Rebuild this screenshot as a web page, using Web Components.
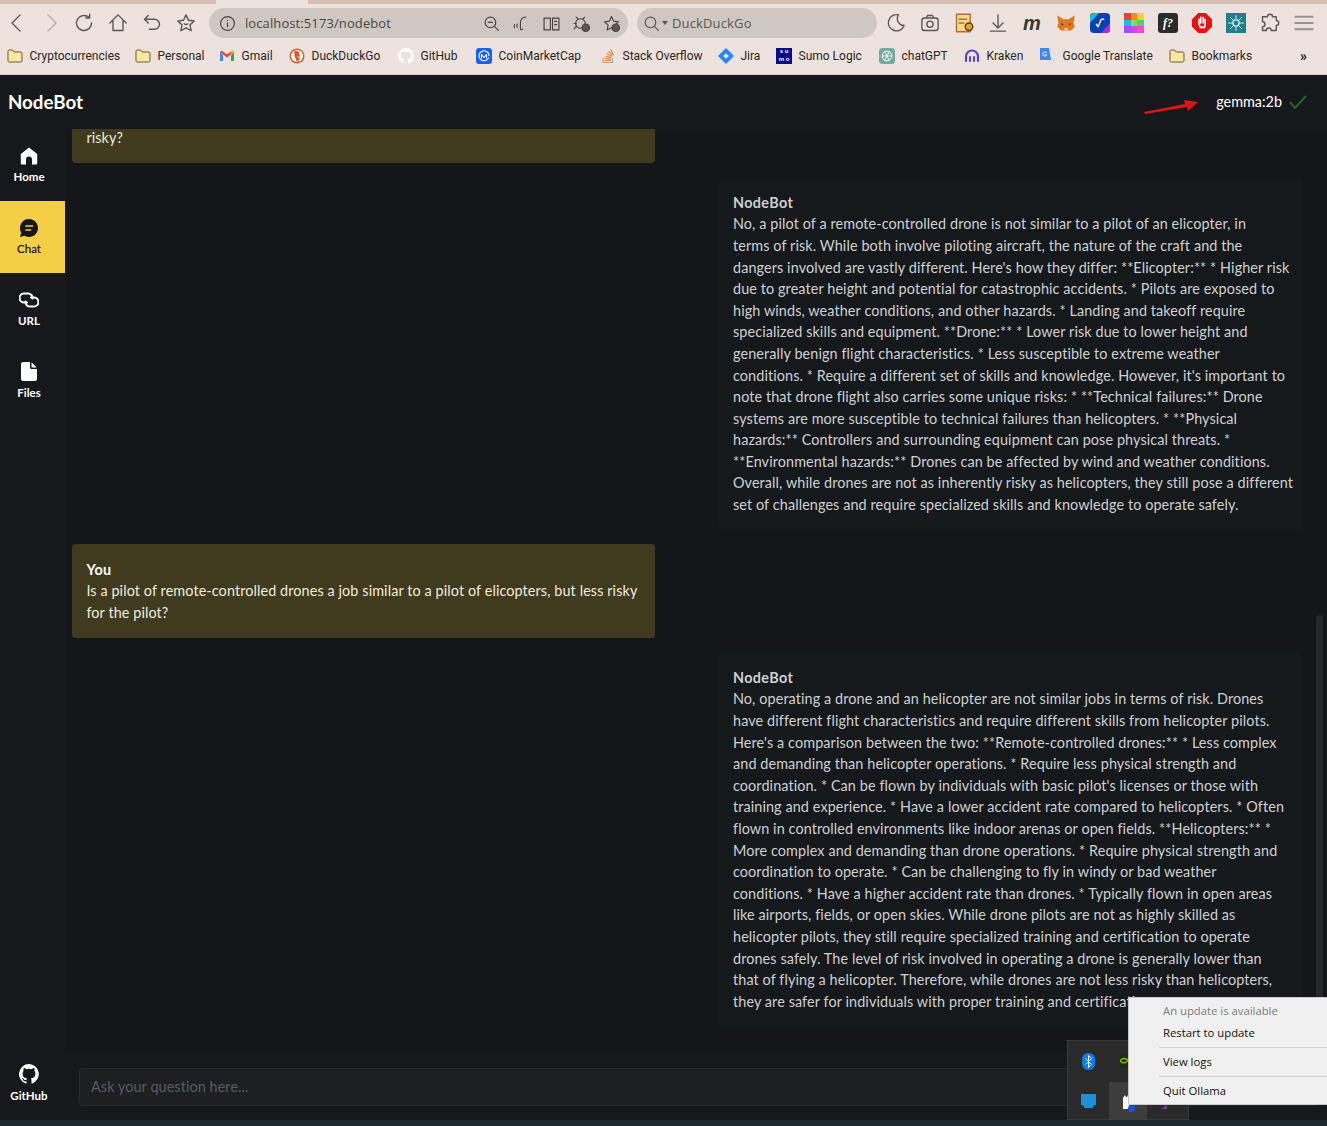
<!DOCTYPE html>
<html lang="en">
<head>
<meta charset="utf-8">
<title>NodeBot</title>
<style>
html, body { margin: 0; height: 100%; overflow: hidden; background: #17181b; }
body { font-family: "Lato", "Liberation Sans", sans-serif; }
</style>
</head>
<body>
<browser-chrome></browser-chrome>
<node-bot></node-bot>
<tray-menu></tray-menu>

<script>
const svg = (body, size = 16) => `<svg width="${size}" height="${size}" viewBox="0 0 16 16" fill="none" stroke="currentColor" stroke-width="1.1" stroke-linecap="round" stroke-linejoin="round">${body}</svg>`;

const githubPath = "M8 0a8 8 0 0 0-2.5 15.6c.4.1.5-.2.5-.4v-1.400c-2.200.5-2.700-1-2.700-1-.4-.9-.9-1.200-.9-1.200-.7-.5.100-.5.100-.5.800.1 1.200.8 1.200.8.700 1.200 1.900.9 2.300.7.100-.5.300-.9.500-1.100-1.800-.2-3.600-.9-3.600-4 0-.9.300-1.600.8-2.100-.1-.2-.4-1 .1-2.100 0 0 .7-.2 2.200.8a7.700 7.700 0 0 1 4 0c1.500-1 2.200-.8 2.200-.8.400 1.100.2 1.900.1 2.100.5.600.8 1.300.8 2.100 0 3.100-1.900 3.700-3.700 3.900.3.300.6.800.6 1.500v2.200c0 .2.100.5.600.4A8 8 0 0 0 8 0z";

const folder = svg(`<path d="M1 3.2C1 2.500 1.500 2 2.200 2h3.400l1.600 2h6.600c.7 0 1.200.5 1.200 1.200v7.600c0 .7-.5 1.200-1.200 1.200H2.200C1.500 14 1 13.500 1 12.800z" fill="#fbe7a1" stroke="#6e5c2a" stroke-width="1"/>`);

// label, icon, distance to the next bookmark's icon
const bookmarks = [
	["Cryptocurrencies", folder, 128],
	["Personal", folder, 84],
	["Gmail", svg(`<path d="M1 4v9h3V7z" fill="#4285f4" stroke="none"/><path d="M15 4v9h-3V7z" fill="#34a853" stroke="none"/><path d="M1 4l1.500-1.400L8 6.600l5.500-4L15 4 8 9.500z" fill="#ea4335" stroke="none"/><path d="M12 7l3-3-1.500-1.400L12 4z" fill="#fbbc04" stroke="none"/>`), 70],
	["DuckDuckGo", svg(`<circle cx="8" cy="8" r="7.500" fill="#de5833" stroke="none"/><circle cx="8" cy="8" r="6" fill="#fff" stroke="none"/><path d="M5.500 3c3-.8 5.500 1 5 4 .5 2 .2 4-.8 6.500H7.500C7 10.500 4.500 7 5.500 3z" fill="#de5833" stroke="none"/><path d="M8 8h3.200L9.500 10z" fill="#fdd20a" stroke="none"/><path d="M8.500 10.500l1 3H8z" fill="#65bc46" stroke="none"/>`), 109],
	["GitHub", `<svg width="16" height="16" viewBox="0 0 16 16" fill="#fff"><path d="${githubPath}"/></svg>`, 78],
	["CoinMarketCap", svg(`<rect x="0" y="0" width="16" height="16" rx="3" fill="#1d5ff2" stroke="none"/><path d="M12.500 10A5 5 0 1 1 13 7.500" stroke="#fff"/><path d="M5.500 10V6.500l2.500 3 2.500-3V10" stroke="#fff"/>`), 124],
	["Stack Overflow", svg(`<path d="M3 10v4.500h9.500V10" stroke="#a8a29c"/><path d="M5 12.500h5.500M5.200 10.500l5.200.6M5.800 8.200l5 1.400M7 5.800l4.400 2.500M8.800 3.600l3.600 3.600M11 1.500l1.900 4.700" stroke="#ef8236" stroke-width="1.100"/>`), 118],
	["Jira", svg(`<path d="M8 0l8 8-8 8-8-8z" fill="#2684ff" stroke="none"/><path d="M8 5.200L10.800 8 8 10.800 5.200 8z" fill="#ede2dd" stroke="none"/>`), 58],
	["Sumo Logic", `<span class="sumo">s u<br>m o</span>`, 103],
	["chatGPT", svg(`<rect x="0" y="0" width="16" height="16" rx="3.500" fill="#74aa9c" stroke="none"/><circle cx="8" cy="8" r="4.800" stroke="#fff" stroke-width="1"/><path d="M6 4l4 8M10 4l-4 8M3.500 8h9" stroke="#fff" stroke-width=".8"/>`), 85],
	["Kraken", svg(`<path d="M2 13V8.500a6 6 0 0 1 12 0V13" stroke="#5741d9" stroke-width="2.200"/><path d="M6 13V9M10 13V9" stroke="#5741d9" stroke-width="2"/>`), 76],
	["Google Translate", svg(`<path d="M7 4h8.500v12H9z" fill="#dfe3e8" stroke="none"/><path d="M0 0h9l2 12H0z" fill="#4285f4" stroke="none"/><path d="M6.500 4.500a2.200 2.200 0 1 0 .3 2.500H4.800" stroke="#fff" stroke-width=".9"/>`), 129],
	["Bookmarks", folder, 131],
];

class BrowserChrome extends HTMLElement {
	constructor() {
		super();
		this.attachShadow({ mode: "open" });
		this.shadowRoot.innerHTML = `<style>
		:host { display: block; height: 75px; box-sizing: border-box; border-bottom: 1px solid #d5cbc6; background: #ede2dd; color: #5c5754; font-family: "Open Sans", "Liberation Sans", sans-serif; overflow: hidden; }
		svg { display: block; flex: none; }
		#tabs { display: flex; height: 4px; background: #d8bfb6; }
		#tabs i { width: 92px; margin-left: 216px; background: #ede2dd; }
		#tools { display: flex; align-items: center; height: 38px; }
		.btn { width: 33.8px; display: flex; justify-content: center; flex: none; }
		#url, #search { display: flex; align-items: center; height: 30px; border-radius: 15px; background: #cfc7c2; font-size: 13px; box-sizing: border-box; flex: none; }
		#url { width: 419px; margin-left: 6.2px; padding-left: 10px; gap: 9px; color: #4b4643; letter-spacing: .1px; }
		#url .right { margin-left: auto; display: flex; gap: 13px; padding-right: 8px; }
		#search { width: 240px; margin-left: 9px; padding-left: 6px; gap: 2px; color: #5c5754; letter-spacing: .15px; }
		#ext { display: flex; align-items: center; gap: 14px; margin-left: 9px; }
		#ext > * { flex: none; width: 20px; }
		#marks { display: flex; align-items: center; height: 28px; padding-left: 7px; font: 12px "Roboto", "Liberation Sans", sans-serif; color: #2b2725; white-space: nowrap; }
		.item { display: flex; align-items: center; gap: 6.500px; flex: none; }
		.sumo { display: block; width: 16px; height: 16px; flex: none; background: #0a0a86; color: #fff; font: 700 6px/7.500px "Liberation Sans", sans-serif; text-align: center; }
		#more { font-weight: 700; font-size: 14px; color: #222; }
		</style>
		<div id="tabs"><i></i></div>
		<div id="tools">
			<span class="btn">${svg(`<path d="M10.500 1.500L4 8l6.500 6.500"/>`, 20)}</span>
			<span class="btn" style="color:#b3aca8">${svg(`<path d="M5.500 1.500L12 8l-6.500 6.500"/>`, 20)}</span>
			<span class="btn">${svg(`<path d="M14 8a6 6 0 1 1-2-4.500M12.500 1v3h-3"/>`, 20)}</span>
			<span class="btn">${svg(`<path d="M1.500 8L8 1.500 14.500 8M4 6.500V14h8V6.500"/>`, 20)}</span>
			<span class="btn">${svg(`<path d="M5 2L2 5l3 3M2 5h8a4 4 0 0 1 0 8H6"/>`, 20)}</span>
			<span class="btn">${svg(`<path d="M8 1.500l2 4.300 4.600.6-3.400 3.100.9 4.700L8 11.900l-4.100 2.300.9-4.700L1.400 6.400 6 5.800z"/><path d="M6.500 8.500c.8.800 2.200.8 3 0"/>`, 20)}</span>
			<div id="url">
				${svg(`<circle cx="8" cy="8" r="6.500"/><path d="M8 7.500V11M8 5v.2"/>`, 17)}
				<span>localhost:5173/nodebot</span>
				<span class="right">
					${svg(`<circle cx="7" cy="7" r="5"/><path d="M5 7h4M11 11l3.500 3.500"/>`, 17)}
					${svg(`<path d="M1.500 9c-.5 1-.5 2 0 3M4 8.500c-.5 1-.5 2 0 3M12 2C9 2 7 4 7 7v6c0 1 1 1 2 .5"/>`, 17)}
					${svg(`<path d="M1 3h6v11H1zM9 3h6v11H9zM11 6h2M11 9h2"/>`, 17)}
					${svg(`<circle cx="7" cy="8" r="4.500"/><path d="M3 2l2 2M11 2L9 4M1 8h2M1 13l2-2"/><circle cx="12" cy="12" r="3.500" fill="#5c5754"/>`, 17)}
					${svg(`<path d="M8 1.500l2 4.300 4.600.6-3.400 3.100.9 4.700L8 11.900l-4.100 2.300.9-4.700L1.400 6.400 6 5.800z"/><circle cx="12" cy="12" r="3.500" fill="#5c5754"/>`, 17)}
				</span>
			</div>
			<div id="search">${svg(`<circle cx="7" cy="7" r="5"/><path d="M11 11l3.500 3.500"/>`, 17)}<svg width="6" height="4" viewBox="0 0 6 4"><path d="M0 0h6L3 4z" fill="#5c5754"/></svg><span style="margin-left:2px">DuckDuckGo</span></div>
			<div id="ext">
				${svg(`<path d="M10 1.500A6.500 6.500 0 1 0 14.500 10 5.500 5.500 0 0 1 10 1.500z"/>`, 20)}
				${svg(`<rect x="1.500" y="4" width="13" height="10" rx="2"/><path d="M5 4l1-2h4l1 2"/><circle cx="8" cy="9" r="2.500"/>`, 20)}
				${svg(`<rect x="2" y="1" width="11" height="14" fill="#fbd98a" stroke="#b06d2e"/><path d="M4 5h6M4 8h4" stroke="#b06d2e"/><circle cx="12" cy="11" r="3" fill="#e8a33c" stroke="#5c3a10"/>`, 20)}
				${svg(`<path d="M8 1.500v10M4 8l4 4 4-4M2 14.500h12"/>`, 20)}
				<span style="font: italic 700 20px/20px 'Liberation Sans', sans-serif; color: #3a3735; text-align: center;">m</span>
				${svg(`<path d="M1 2l5 3h4l5-3-1 6 1 3-3 3H4l-3-3 1-3z" fill="#e2761b" stroke="none"/><path d="M4 8l2 1-1 1zM12 8l-2 1 1 1z" fill="#233447" stroke="none"/><path d="M6 12h4l-1 2H7z" fill="#d7c1b3" stroke="none"/>`, 20)}
				${svg(`<rect x="0" y="0" width="16" height="16" rx="3" fill="#0a3fb5" stroke="none"/><path d="M0 4a4 4 0 0 1 4-4h3L0 8z" fill="#10c6d8" stroke="none"/><path d="M16 8v5a3 3 0 0 1-3 3H9z" fill="#b02ad8" stroke="none"/><path d="M5 9l1.500 2L9 5h2" stroke="#fff"/>`, 20)}
				<span style="display:grid;grid-template-columns:repeat(3,1fr);grid-auto-rows:6.500px;height:20px"><b style="background:#e8452c"></b><b style="background:#f58c1e"></b><b style="background:#fbd31b"></b><b style="background:#22b8e0"></b><b style="background:#8bdb4a"></b><b style="background:#4fce7c"></b><b style="background:#a64cf0"></b><b style="background:#c74bf0"></b><b style="background:#f04bd0"></b></span>
				<span style="display:flex;align-items:center;justify-content:center;height:20px;border-radius:3px;background:#2b2b2b;color:#fff;font:italic 700 12px 'Liberation Serif',serif;">f?</span>
				${svg(`<path d="M5 0h6l5 5v6l-5 5H5l-5-5V5z" fill="#ea1010" stroke="none"/><path d="M5.500 8V5M7 8V3.500M9 8V3.500M10.500 8.500V5M5.500 8l1 3.500h3.500l.5-3" stroke="#fff" stroke-width="1.300"/>`, 20)}
				${svg(`<rect x="0" y="0" width="16" height="16" fill="#1f7f8a" stroke="none"/><circle cx="8" cy="8" r="2.500" stroke="#cdeff0"/><path d="M8 2v3M8 11v3M2 8h3M11 8h3M3.500 3.500L6 6M12.500 3.500L10 6M3.500 12.500L6 10M12.500 12.500L10 10" stroke="#cdeff0" stroke-width=".8"/>`, 20)}
				${svg(`<path d="M6 3a2 2 0 0 1 4 0h3v3a2 2 0 0 1 0 4v4H9a2 2 0 0 0-4 0H2v-3a2 2 0 0 0 0-4V3z"/>`, 20)}
				${svg(`<path d="M1 3h14M1 8h14M1 13h14" stroke="#9a9490" stroke-width="1.500"/>`, 20)}
			</div>
		</div>
		<div id="marks">
			${bookmarks.map(([name, icon, width]) => `<span class="item" style="width:${width}px">${icon}<span>${name}</span></span>`).join("")}
			<span id="more">»</span>
		</div>`;
	}
}
customElements.define("browser-chrome", BrowserChrome);

class NavItem extends HTMLElement {
	constructor() {
		super();
		this.attachShadow({ mode: "open" });
		this.shadowRoot.innerHTML = `<style>
		:host { display: flex; flex-direction: column; align-items: center; justify-content: center; gap: 5px; width: 65px; height: 72px; box-sizing: border-box; padding-right: 7px; color: #fff; font-size: 11.500px; line-height: 14px; font-weight: 700; flex: none; }
		:host([active]) { background: #f4cf45; color: #17181b; font-weight: 400; -webkit-text-stroke: .2px #17181b; }
		::slotted(svg) { display: block; }
		</style><slot name="icon"></slot><slot></slot>`;
	}
}
customElements.define("nav-item", NavItem);

class ChatBubble extends HTMLElement {
	constructor() {
		super();
		this.attachShadow({ mode: "open" });
		this.shadowRoot.innerHTML = `<style>
		:host { display: block; width: 583px; box-sizing: border-box; padding: 14.400px; border-radius: 4px; background: #15191b; color: #cfd0d0; font-size: 14.400px; line-height: 21.600px; letter-spacing: .1px; white-space: nowrap; }
		:host([you]) { background: #403a1f; color: #efeadb; }
		:host([bot]) { align-self: flex-end; }
		b { display: block; font-weight: 700; letter-spacing: .35px; }
		:host([you]) b { color: #fff; }
		</style><b>${this.hasAttribute("you") ? "You" : "NodeBot"}</b><slot></slot>`;
	}
}
customElements.define("chat-bubble", ChatBubble);

class NodeBot extends HTMLElement {
	constructor() {
		super();
		this.attachShadow({ mode: "open" });
		this.shadowRoot.innerHTML = `<style>
		:host { display: grid; grid-template-columns: 65px 1fr; grid-template-rows: 54px 923px 74px; height: 1051px; background: #17181b; color: #fff; }
		svg { display: block; }
		header { grid-column: 1 / 3; display: flex; align-items: center; justify-content: space-between; padding: 0 20px 0 8px; }
		h1 { margin: -1px 0 0; font-size: 18.720px; font-weight: 700; }
		#model { display: flex; align-items: center; gap: 7px; font-size: 14.400px; position: relative; margin-top: -1px; }
		#arrow { position: absolute; left: -73px; top: 6px; }
		nav { grid-row: 2 / 4; display: flex; flex-direction: column; }
		nav .gh { margin-top: auto; margin-bottom: 7px; }
		main { position: relative; overflow: hidden; background: #141619; padding-right: 25.400px; }
		main .scroll { position: absolute; right: 4px; top: 486px; width: 7px; bottom: 0; background: #25272a; border-radius: 4px 4px 0 0; }
		#thread { display: flex; flex-direction: column; gap: 14.400px; padding-left: 7px; margin-top: -59.600px; }
		footer { padding: 16px 0 0 14px; background: #17181b; }
		input { display: block; box-sizing: border-box; width: 1240px; height: 38px; padding: 0 11px 1px; background: #1d1f22; border: 1px solid #26282b; border-radius: 4px; font: 14.400px "Lato", sans-serif; letter-spacing: .085px; color: #fff; outline: 0; }
		input::placeholder { color: #595c60; opacity: 1; }
		</style>
		<header>
			<h1>NodeBot</h1>
			<div id="model">
				<svg id="arrow" width="56" height="16" viewBox="0 0 56 16"><path d="M1 13L42 5l-1-4 14 2-10 9-1-4L2 15z" fill="#e01414"/></svg>
				<span>gemma:2b</span>
				<svg width="18" height="14" viewBox="0 0 18 14" fill="none" stroke="#117a22" stroke-width="1.700"><path d="M1 7l5 6L17 1"/></svg>
			</div>
		</header>
		<nav>
			<nav-item>
				<svg slot="icon" width="18" height="18" viewBox="0 0 18 18" fill="#fff"><path d="M9 0.500L.8 7v9.200c0 .7.500 1.300 1.200 1.300h4V12.500a3 3 0 0 1 6 0v5h4c.7 0 1.200-.6 1.200-1.300V7z"/></svg>
				Home
			</nav-item>
			<nav-item active>
				<svg slot="icon" width="18" height="18" viewBox="0 0 18 18" fill="#17181b"><path d="M9 0a9 9 0 1 1-4.500 16.800L0 18l1.200-4.500A9 9 0 0 1 9 0z"/><path d="M6 7h6.500M6 11h4.500" stroke="#f4cf45" stroke-width="1.700" stroke-linecap="round"/></svg>
				Chat
			</nav-item>
			<nav-item>
				<svg slot="icon" width="20" height="18" viewBox="0 0 20 18" fill="none" stroke="#fff" stroke-width="2" stroke-linecap="round"><path d="M8 11.500H5.500a4.500 4.500 0 0 1-.8-9H9.500a4.500 4.500 0 0 1 4 5"/><path d="M12 6.500h2.500a4.500 4.500 0 0 1 .8 9H10.500a4.500 4.500 0 0 1-4-5"/></svg>
				URL
			</nav-item>
			<nav-item>
				<svg slot="icon" width="16" height="19" viewBox="0 0 16 19" fill="#fff"><path d="M0 2C0 .9.900 0 2 0h7v5.500c0 .8.700 1.500 1.500 1.500H16v10c0 1.100-.9 2-2 2H2c-1.100 0-2-.9-2-2zM10.500 0.300L15.700 5.500h-5.200z"/></svg>
				Files
			</nav-item>
			<nav-item class="gh">
				<svg slot="icon" width="20" height="20" viewBox="0 0 16 16" fill="#fff"><path d="${githubPath}"/></svg>
				GitHub
			</nav-item>
		</nav>
		<main>
			<div id="thread">
				<chat-bubble you>Is a pilot of a remote-controlled drone similar to a pilot of an elicopter, but less<br>risky?</chat-bubble>
				<chat-bubble bot>No, a pilot of a remote-controlled drone is not similar to a pilot of an elicopter, in<br>terms of risk. While both involve piloting aircraft, the nature of the craft and the<br>dangers involved are vastly different. Here's how they differ: **Elicopter:** * Higher risk<br>due to greater height and potential for catastrophic accidents. * Pilots are exposed to<br>high winds, weather conditions, and other hazards. * Landing and takeoff require<br>specialized skills and equipment. **Drone:** * Lower risk due to lower height and<br>generally benign flight characteristics. * Less susceptible to extreme weather<br>conditions. * Require a different set of skills and knowledge. However, it's important to<br>note that drone flight also carries some unique risks: * **Technical failures:** Drone<br>systems are more susceptible to technical failures than helicopters. * **Physical<br>hazards:** Controllers and surrounding equipment can pose physical threats. *<br>**Environmental hazards:** Drones can be affected by wind and weather conditions.<br>Overall, while drones are not as inherently risky as helicopters, they still pose a different<br>set of challenges and require specialized skills and knowledge to operate safely.</chat-bubble>
				<chat-bubble you>Is a pilot of remote-controlled drones a job similar to a pilot of elicopters, but less risky<br>for the pilot?</chat-bubble>
				<chat-bubble bot>No, operating a drone and an helicopter are not similar jobs in terms of risk. Drones<br>have different flight characteristics and require different skills from helicopter pilots.<br>Here's a comparison between the two: **Remote-controlled drones:** * Less complex<br>and demanding than helicopter operations. * Require less physical strength and<br>coordination. * Can be flown by individuals with basic pilot's licenses or those with<br>training and experience. * Have a lower accident rate compared to helicopters. * Often<br>flown in controlled environments like indoor arenas or open fields. **Helicopters:** *<br>More complex and demanding than drone operations. * Require physical strength and<br>coordination to operate. * Can be challenging to fly in windy or bad weather<br>conditions. * Have a higher accident rate than drones. * Typically flown in open areas<br>like airports, fields, or open skies. While drone pilots are not as highly skilled as<br>helicopter pilots, they still require specialized training and certification to operate<br>drones safely. The level of risk involved in operating a drone is generally lower than<br>that of flying a helicopter. Therefore, while drones are not less risky than helicopters,<br>they are safer for individuals with proper training and certification.</chat-bubble>
			</div>
			<div class="scroll"></div>
		</main>
		<footer><input placeholder="Ask your question here..."></footer>`;
	}
}
customElements.define("node-bot", NodeBot);

class TrayMenu extends HTMLElement {
	constructor() {
		super();
		this.attachShadow({ mode: "open" });
		this.shadowRoot.innerHTML = `<style>
		:host { position: fixed; left: 1067px; top: 997px; right: 0; bottom: 0; display: block; font-family: "Open Sans", "Liberation Sans", sans-serif; }
		#tray { position: absolute; left: 0; top: 43px; width: 122px; height: 80px; background: #2a2a2a; border: 1px solid #3a3a3a; box-sizing: border-box; }
		#tray svg, #hi { position: absolute; }
		#hi { left: 41px; top: 41px; width: 38px; height: 38px; background: #3d3d3d; }
		#menu { position: absolute; left: 61px; top: 0; right: 0; height: 108px; background: #f0f0f0; border: 1px solid #c9c9c9; border-right: 0; box-sizing: border-box; color: #111; font-size: 11.300px; padding: 2px 0 0 34px; }
		#menu div { height: 21px; line-height: 21px; }
		#menu .muted { color: #7d7d7d; height: 22px; }
		hr { margin: 4px 0 3px -4px; border: 0; border-top: 1px solid #d2d2d2; }
		#strip { position: absolute; left: -1067px; right: 0; bottom: 0; height: 6px; background: #1c2a30; }
		</style>
		<div id="strip"></div>
		<div id="tray">
			<svg style="left:14px;top:12px" width="13" height="17" viewBox="0 0 13 17"><rect width="13" height="17" rx="6" fill="#0a7ee6"/><path d="M3.500 5.500l6 6-3 3v-12l3 3-6 6" fill="none" stroke="#fff"/></svg>
			<svg style="left:52px;top:13px" width="8" height="14" viewBox="0 0 8 14"><rect width="8" height="14" fill="#1e2a1a"/><path d="M0 7c2-3 5-3 8-1-2 3-5 4-8 1z" fill="none" stroke="#76b900" stroke-width="1.500"/></svg>
			<svg style="left:13px;top:53px" width="15" height="15" viewBox="0 0 15 15"><path d="M0 0h15v11l-3 1v2H3v-2l-3-1z" fill="#1b8fd8"/></svg>
			<div id="hi"></div>
			<svg style="left:54px;top:53px" width="9" height="15" viewBox="0 0 9 15"><path d="M1 15V4l2-3 1 2h1l1-2 1 3v11z" fill="#fff"/></svg>
			<svg style="left:60px;top:64px" width="7" height="7" viewBox="0 0 7 7"><circle cx="3.500" cy="3.500" r="3.500" fill="#1d4fe0"/></svg>
			<svg style="left:93px;top:64px" width="6" height="4" viewBox="0 0 6 4"><path d="M6 0v4H0z" fill="#6a3fa0"/></svg>
		</div>
		<div id="menu">
			<div class="muted">An update is available</div>
			<div>Restart to update</div>
			<hr>
			<div>View logs</div>
			<hr>
			<div>Quit Ollama</div>
		</div>`;
	}
}
customElements.define("tray-menu", TrayMenu);
</script>
</body>
</html>
